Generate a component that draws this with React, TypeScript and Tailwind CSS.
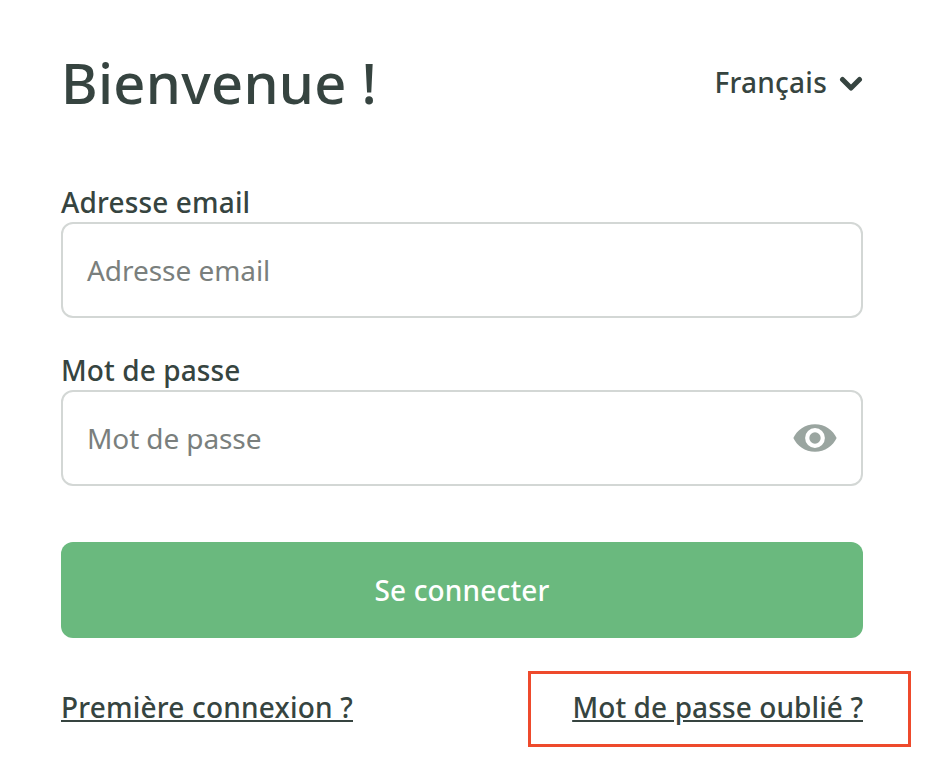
function EyeIcon() {
  return (
    <svg width="44" height="30" viewBox="0 0 24 16" fill="#9aa5a0">
      <path fillRule="evenodd" d="M12 0.500C6.500 0.500 2.200 3.800 0.200 8c2 4.200 6.300 7.500 11.800 7.500S21.800 12.200 23.800 8C21.800 3.800 17.500 0.500 12 0.500zM12 13.400a5.400 5.400 0 1 1 0-10.800 5.400 5.400 0 0 1 0 10.800zM12 4.900a3.100 3.100 0 1 0 0 6.200 3.100 3.100 0 0 0 0-6.200z" />
    </svg>
  )
}

function Chevron() {
  return (
    <svg width="24" height="18" viewBox="0 0 24 18" fill="none" stroke="#364440" strokeWidth="5" strokeLinecap="round" strokeLinejoin="round" className="mt-[4px]">
      <path d="M3.500 4.500 12 13l8.500-8.500" />
    </svg>
  )
}

export default function App() {
  return (
    <div className="relative h-[762px] w-[934px] bg-white font-['Noto_Sans','Open_Sans',sans-serif] text-[#364440]">
      <div className="ml-[61px] w-[802px] pt-[46px]">
        <div className="flex items-center justify-between">
          <h1 className="text-[56px] leading-[72px] font-medium tracking-[0.3px]">Bienvenue !</h1>
          <div className="flex items-center gap-[12px] text-[28px] font-medium tracking-[0.25px]">
            Français
            <Chevron />
          </div>
        </div>

        <label className="mt-[66px] block text-[28px] leading-[36px] font-medium tracking-[0.15px]">Adresse email</label>
        <div className="mt-[2px] flex h-[96px] items-center rounded-[12px] border-2 border-[#d3d7d5] px-[24px] text-[28px] tracking-[-0.05px] text-[#7a7f7d]">
          Adresse email
        </div>

        <label className="mt-[34px] block text-[28px] leading-[36px] font-medium tracking-[0.1px]">Mot de passe</label>
        <div className="mt-[2px] flex h-[96px] items-center justify-between rounded-[12px] border-2 border-[#d3d7d5] pr-[24px] pl-[24px] text-[28px] tracking-[-0.1px] text-[#7a7f7d]">
          Mot de passe
          <EyeIcon />
        </div>

        <button className="mt-[56px] h-[96px] w-full rounded-[12px] bg-[#6ab97e] text-[28px] font-medium tracking-[0.15px] text-white">
          Se connecter
        </button>

        <div className="mt-[48px] flex items-center justify-between text-[28px] font-medium underline">
          <a className="tracking-[0.2px]">Première connexion ?</a>
          <a className="tracking-[0.1px]">Mot de passe oublié ?</a>
        </div>
      </div>
      <div className="absolute top-[671px] left-[528px] h-[76px] w-[383px] border-[3px] border-[#ee4a2c]" />
    </div>
  )
}
